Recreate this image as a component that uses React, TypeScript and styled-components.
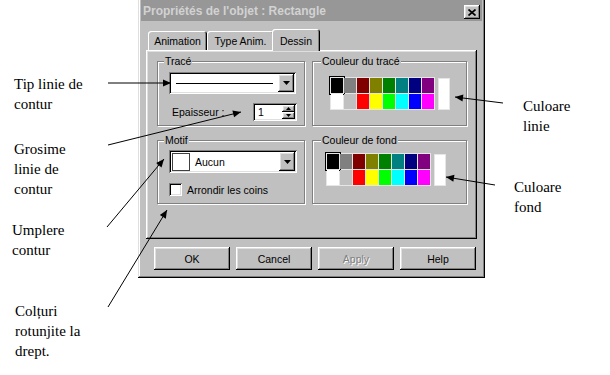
import React from "react";
import styled, { createGlobalStyle } from "styled-components";

const GlobalStyle = createGlobalStyle`
  html, body { margin: 0; padding: 0; background: #fff; }
  body { width: 610px; height: 375px; overflow: hidden; }
  #root { width: 610px; height: 375px; }
`;

const UI_FONT = `"Liberation Sans", Arial, sans-serif`;
const SERIF = `"Liberation Serif", "DejaVu Serif", "Times New Roman", serif`;

const RAISED = `inset -1px -1px #000, inset 1px 1px #fff, inset -2px -2px #808080, inset 2px 2px #dfdfdf`;
const SUNKEN = `inset 1px 1px #808080, inset -1px -1px #fff, inset 2px 2px #000, inset -2px -2px #dfdfdf`;

const Page = styled.div`
  position: relative;
  width: 610px;
  height: 375px;
  display: flex;
  background: #fff;
  overflow: hidden;
`;

const NotesColumn = styled.div<{ $width?: number }>`
  ${(p) => (p.$width ? `width: ${p.$width}px; flex: none;` : "flex: 1;")}
  display: flex;
  flex-direction: column;
`;

const Note = styled.p<{ $top: number; $indent: number }>`
  margin: ${(p) => p.$top}px 0 0 0;
  padding-left: ${(p) => p.$indent}px;
  font-family: ${SERIF};
  font-size: 15px;
  line-height: 20px;
  color: #000;
  white-space: nowrap;
`;

const Dialog = styled.div`
  width: 347px;
  height: 278px;
  flex: none;
  box-sizing: border-box;
  background: #c0c0c0;
  padding: 0 3px 3px;
  box-shadow: inset -1px -1px #000, inset 1px 0 #dfdfdf, inset -2px -2px #808080, inset 2px 0 #fff;
  display: flex;
  flex-direction: column;
  font-family: ${UI_FONT};
  font-size: 10.5px;
  color: #000;
`;

const TitleBar = styled.div`
  height: 21px;
  flex: none;
  background: #979797;
  display: flex;
  align-items: center;
  padding: 0 2px 0 2px;
`;

const TitleText = styled.span`
  flex: 1;
  font-family: ${UI_FONT};
  font-weight: bold;
  font-size: 12px;
  color: #d2d2d2;
  white-space: nowrap;
`;

const CloseButton = styled.div`
  width: 16px;
  height: 14px;
  margin-top: 3px;
  background: #c0c0c0;
  box-shadow: ${RAISED};
  display: flex;
  align-items: center;
  justify-content: center;
`;

const Body = styled.div`
  padding: 8px 5px 0;
  display: flex;
  flex-direction: column;
`;

const TabRow = styled.div`
  height: 21px;
  display: flex;
  align-items: flex-end;
  padding-left: 2px;
`;

const Tab = styled.div<{ $width: number; $active?: boolean }>`
  position: relative;
  z-index: ${(p) => (p.$active ? 2 : 1)};
  width: ${(p) => p.$width}px;
  height: ${(p) => (p.$active ? 22 : 19)}px;
  margin: ${(p) => (p.$active ? "0 -2px -1px -2px" : "0")};
  box-sizing: border-box;
  background: #c0c0c0;
  border-radius: 3px 3px 0 0;
  box-shadow: inset 1px 1px #fff, inset -1px 0 #000, inset -2px 0 #808080;
  display: flex;
  align-items: center;
  justify-content: center;
  padding-top: 1px;
  white-space: nowrap;
`;

const Panel = styled.div`
  position: relative;
  z-index: 0;
  height: 189px;
  box-sizing: border-box;
  background: #c0c0c0;
  box-shadow: ${RAISED};
  padding: 11px 10px 0 11px;
  display: grid;
  grid-template-columns: 148px 155px;
  grid-template-rows: 65px 64px;
  column-gap: 7px;
  row-gap: 14px;
`;

const Group = styled.div<{ $padLeft: number; $padTop: number }>`
  position: relative;
  box-sizing: border-box;
  border: 1px solid #808080;
  box-shadow: inset 1px 1px #fff, 1px 1px #fff;
  padding: ${(p) => p.$padTop}px 0 0 ${(p) => p.$padLeft}px;
  display: flex;
  flex-direction: column;
  align-items: flex-start;
`;

const GroupTitle = styled.span<{ $left: number }>`
  position: absolute;
  top: -7px;
  left: ${(p) => p.$left}px;
  padding: 0 1px;
  background: #c0c0c0;
  line-height: 13px;
  white-space: nowrap;
`;

const Combo = styled.div<{ $width: number; $height: number }>`
  width: ${(p) => p.$width}px;
  height: ${(p) => p.$height}px;
  box-sizing: border-box;
  background: #fff;
  box-shadow: ${SUNKEN};
  padding: 2px;
  display: flex;
  align-items: center;
`;

const LinePreview = styled.div`
  flex: 1;
  height: 1px;
  background: #000;
  margin: 0 5px 0 5px;
`;

const DropButton = styled.div`
  width: 16px;
  align-self: stretch;
  margin-left: auto;
  flex: none;
  background: #c0c0c0;
  box-shadow: ${RAISED};
  display: flex;
  align-items: center;
  justify-content: center;
`;

const FillSample = styled.div`
  width: 18px;
  height: 18px;
  box-sizing: border-box;
  border: 1px solid #404040;
  background: #fff;
  margin-left: 1px;
`;

const ComboText = styled.span`
  margin-left: 5px;
`;

const FieldRow = styled.div<{ $width: number; $gap: number }>`
  width: ${(p) => p.$width}px;
  margin-top: ${(p) => p.$gap}px;
  display: flex;
  align-items: center;
  justify-content: space-between;
`;

const FieldLabel = styled.span`
  padding-left: 3px;
  white-space: nowrap;
`;

const SpinBox = styled.div`
  width: 44px;
  height: 18px;
  box-sizing: border-box;
  background: #fff;
  box-shadow: ${SUNKEN};
  padding: 2px;
  display: flex;
`;

const SpinValue = styled.span`
  flex: 1;
  padding-left: 3px;
  line-height: 14px;
`;

const SpinButtons = styled.div`
  width: 13px;
  display: flex;
  flex-direction: column;
`;

const SpinButton = styled.div`
  flex: 1;
  background: #c0c0c0;
  box-shadow: ${RAISED};
  display: flex;
  align-items: center;
  justify-content: center;
`;

const CheckRow = styled.div`
  margin-top: 10px;
  display: flex;
  align-items: center;
`;

const CheckBox = styled.div`
  width: 13px;
  height: 13px;
  box-sizing: border-box;
  background: #fff;
  box-shadow: ${SUNKEN};
`;

const CheckLabel = styled.span`
  margin-left: 5px;
  white-space: nowrap;
`;

const PaletteWrap = styled.div`
  display: flex;
  gap: 3px;
`;

const Swatches = styled.div`
  display: grid;
  grid-template-columns: repeat(8, 12px);
  grid-template-rows: repeat(2, 15px);
  gap: 1px;
  padding: 1px;
  background: #e6e6e6;
`;

const Swatch = styled.div<{ $color: string; $selected?: boolean }>`
  background: ${(p) => p.$color};
  ${(p) => (p.$selected ? "outline: 1px solid #000; outline-offset: 1px;" : "")}
`;

const TallSwatch = styled.div`
  width: 12px;
  height: 32px;
  margin-top: 1px;
  background: #fff;
  box-shadow: inset 0 0 0 1px #e6e6e6;
`;

const ButtonRow = styled.div`
  margin-top: 8px;
  padding-left: 8px;
  display: flex;
  gap: 6px;
`;

const PushButton = styled.div<{ $disabled?: boolean }>`
  width: 76px;
  height: 23px;
  box-sizing: border-box;
  background: #c0c0c0;
  box-shadow: ${RAISED};
  display: flex;
  align-items: center;
  justify-content: center;
  color: ${(p) => (p.$disabled ? "#808080" : "#000")};
  text-shadow: ${(p) => (p.$disabled ? "1px 1px #fff" : "none")};
`;

const Overlay = styled.svg`
  position: absolute;
  left: 0;
  top: 0;
  pointer-events: none;
  z-index: 10;
`;

const DownArrow = () => (
  <svg width="7" height="4" viewBox="0 0 7 4">
    <path d="M0 0H7L3.5 4Z" fill="#000" />
  </svg>
);

const SmallArrow = ({ up }: { up?: boolean }) => (
  <svg width="5" height="3" viewBox="0 0 5 3">
    <path d={up ? "M2.5 0L5 3H0Z" : "M0 0H5L2.5 3Z"} fill="#000" />
  </svg>
);

const CloseGlyph = () => (
  <svg width="8" height="7" viewBox="0 0 8 7">
    <path d="M0.5 0.5L7.5 6.5M7.5 0.5L0.5 6.5" stroke="#000" strokeWidth="1.7" />
  </svg>
);

const ROW1 = ["#000000", "#808080", "#800000", "#808000", "#008000", "#008080", "#000080", "#800080"];
const ROW2 = ["#ffffff", "#c0c0c0", "#ff0000", "#ffff00", "#00ff00", "#00ffff", "#0000ff", "#ff00ff"];

const Palette = () => (
  <PaletteWrap>
    <Swatches>
      {[...ROW1, ...ROW2].map((c, i) => (
        <Swatch key={i} $color={c} $selected={i === 0} />
      ))}
    </Swatches>
    <TallSwatch />
  </PaletteWrap>
);

type Arrow = { x1: number; y1: number; x2: number; y2: number };
const ARROWS: Arrow[] = [
  { x1: 108, y1: 83, x2: 171, y2: 83 },
  { x1: 108, y1: 145, x2: 241, y2: 112 },
  { x1: 107, y1: 227, x2: 164, y2: 159 },
  { x1: 108, y1: 307, x2: 167, y2: 210 },
  { x1: 503, y1: 103, x2: 455, y2: 97 },
  { x1: 495, y1: 185, x2: 446, y2: 177 },
];

const head = (a: Arrow) => {
  const dx = a.x2 - a.x1;
  const dy = a.y2 - a.y1;
  const len = Math.hypot(dx, dy);
  const ux = dx / len;
  const uy = dy / len;
  const L = 8;
  const W = 3.5;
  const bx = a.x2 - ux * L;
  const by = a.y2 - uy * L;
  return `${a.x2},${a.y2} ${bx - uy * W},${by + ux * W} ${bx + uy * W},${by - ux * W}`;
};

export default function App() {
  return (
    <>
      <GlobalStyle />
      <Page>
        <NotesColumn $width={138}>
          <Note $top={74} $indent={14}>
            Tip linie de
            <br />
            contur
          </Note>
          <Note $top={25} $indent={14}>
            Grosime
            <br />
            linie de
            <br />
            contur
          </Note>
          <Note $top={21} $indent={12}>
            Umplere
            <br />
            contur
          </Note>
          <Note $top={41} $indent={15}>
            Colțuri
            <br />
            rotunjite la
            <br />
            drept.
          </Note>
        </NotesColumn>

        <Dialog>
          <TitleBar>
            <TitleText>Propriétés de l'objet : Rectangle</TitleText>
            <CloseButton>
              <CloseGlyph />
            </CloseButton>
          </TitleBar>
          <Body>
            <TabRow>
              <Tab $width={59}>Animation</Tab>
              <Tab $width={67}>Type Anim.</Tab>
              <Tab $width={48} $active>
                Dessin
              </Tab>
            </TabRow>
            <Panel>
              <Group $padLeft={11} $padTop={10}>
                <GroupTitle $left={6}>Tracé</GroupTitle>
                <Combo $width={127} $height={22}>
                  <LinePreview />
                  <DropButton>
                    <DownArrow />
                  </DropButton>
                </Combo>
                <FieldRow $width={128} $gap={9}>
                  <FieldLabel>Epaisseur :</FieldLabel>
                  <SpinBox>
                    <SpinValue>1</SpinValue>
                    <SpinButtons>
                      <SpinButton>
                        <SmallArrow up />
                      </SpinButton>
                      <SpinButton>
                        <SmallArrow />
                      </SpinButton>
                    </SpinButtons>
                  </SpinBox>
                </FieldRow>
              </Group>
              <Group $padLeft={17} $padTop={15}>
                <GroupTitle $left={8}>Couleur du tracé</GroupTitle>
                <Palette />
              </Group>
              <Group $padLeft={11} $padTop={9}>
                <GroupTitle $left={6}>Motif</GroupTitle>
                <Combo $width={128} $height={23}>
                  <FillSample />
                  <ComboText>Aucun</ComboText>
                  <DropButton>
                    <DownArrow />
                  </DropButton>
                </Combo>
                <CheckRow>
                  <CheckBox />
                  <CheckLabel>Arrondir les coins</CheckLabel>
                </CheckRow>
              </Group>
              <Group $padLeft={13} $padTop={12}>
                <GroupTitle $left={8}>Couleur de fond</GroupTitle>
                <Palette />
              </Group>
            </Panel>
            <ButtonRow>
              <PushButton>OK</PushButton>
              <PushButton>Cancel</PushButton>
              <PushButton $disabled>Apply</PushButton>
              <PushButton>Help</PushButton>
            </ButtonRow>
          </Body>
        </Dialog>

        <NotesColumn>
          <Note $top={96} $indent={38}>
            Culoare
            <br />
            linie
          </Note>
          <Note $top={41} $indent={29}>
            Culoare
            <br />
            fond
          </Note>
        </NotesColumn>

        <Overlay width={610} height={375} viewBox="0 0 610 375">
          {ARROWS.map((a, i) => (
            <g key={i}>
              <line x1={a.x1} y1={a.y1} x2={a.x2} y2={a.y2} stroke="#000" strokeWidth={1} />
              <polygon points={head(a)} fill="#000" />
            </g>
          ))}
        </Overlay>
      </Page>
    </>
  );
}
